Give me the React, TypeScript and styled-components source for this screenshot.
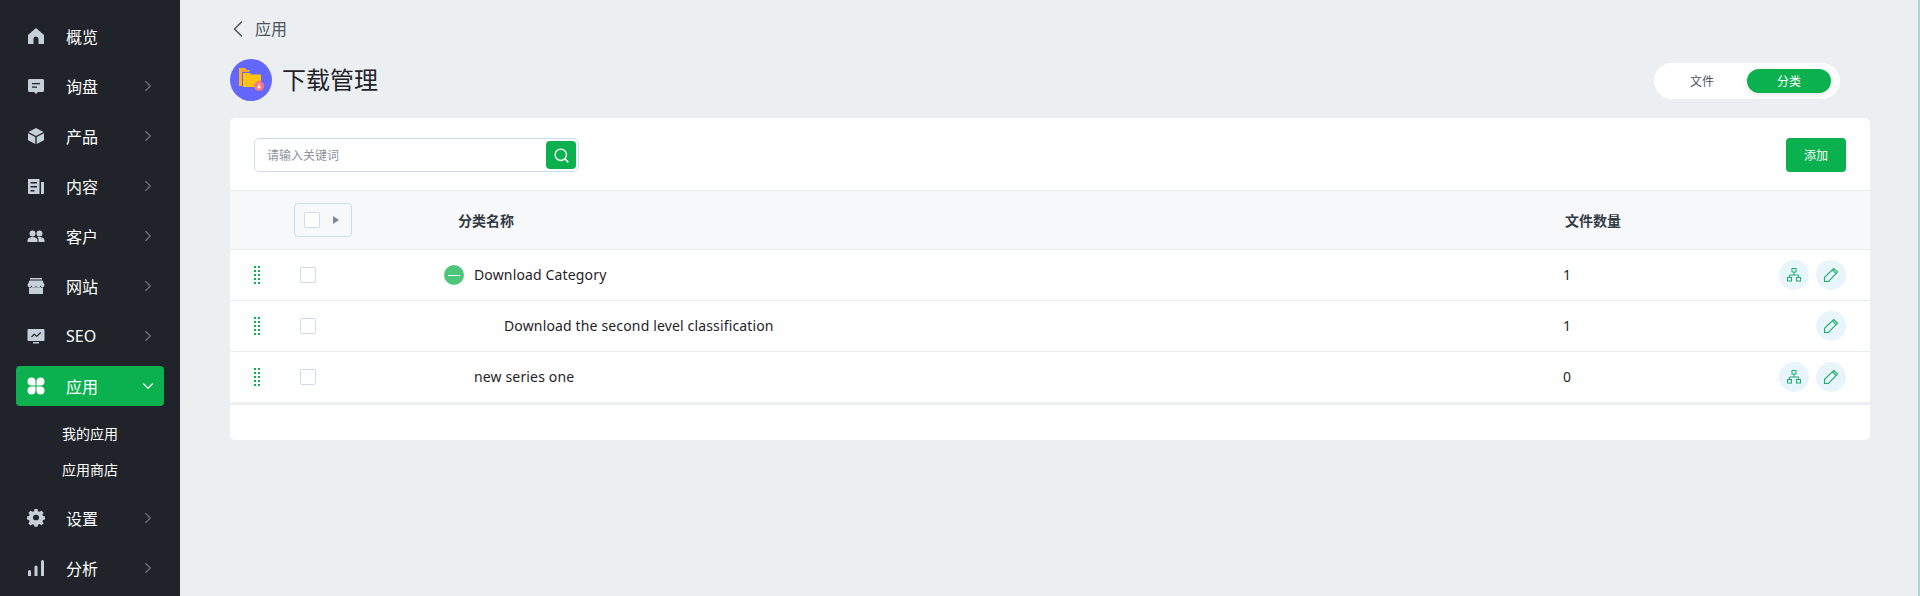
import styled, { createGlobalStyle } from "styled-components";
import { ChevronRight, ChevronDown, ChevronLeft, Search } from "lucide-react";

const GlobalStyle = createGlobalStyle`
  html, body {
    margin: 0;
    padding: 0;
    height: 100%;
    overflow: hidden;
  }
  body {
    font-family: "Noto Sans", "Noto Sans CJK SC", sans-serif;
    font-size: 14px;
    color: #1f2329;
  }
  * {
    box-sizing: border-box;
  }
`;

const Layout = styled.div`
  display: flex;
  width: 1920px;
  height: 596px;
  background-color: #ebeff2;
  border-right: 2px solid #9adbd9;
`;

const Sidebar = styled.nav`
  width: 180px;
  flex-shrink: 0;
  background-color: #202329;
  padding: 16px 16px 0;
  display: flex;
  flex-direction: column;
  overflow: hidden;
`;

const MenuItem = styled.div<{ $active?: boolean }>`
  display: flex;
  align-items: center;
  height: 40px;
  flex-shrink: 0;
  margin-bottom: 10px;
  padding: 0 12px 0 11px;
  border-radius: 4px;
  color: #fff;
  background-color: ${(props) => (props.$active ? "#0bb04f" : "transparent")};
`;

const MenuIcon = styled.svg<{ $active?: boolean }>`
  width: 18px;
  height: 18px;
  flex-shrink: 0;
  fill: ${(props) => (props.$active ? "#fff" : "#c6d0db")};
`;

const MenuLabel = styled.span`
  flex: 1;
  margin-left: 21px;
  font-size: 16px;
`;

const Arrow = styled.span<{ $active?: boolean }>`
  display: flex;
  color: ${(props) => (props.$active ? "#fff" : "#70757c")};
  margin-right: -5px;
`;

const SubMenu = styled.div`
  display: flex;
  flex-direction: column;
  margin-bottom: 10px;
`;

const SubItem = styled.div`
  height: 36px;
  line-height: 36px;
  padding-left: 46px;
  font-size: 14px;
  color: #fff;
`;

const Main = styled.main`
  flex: 1;
  min-width: 0;
  padding: 0 48px 0 50px;
`;

const BackRow = styled.div`
  display: flex;
  align-items: center;
  gap: 3px;
  height: 24px;
  margin: 17px 0 0 -6px;
  color: #4d5560;
  font-size: 16px;
  line-height: 24px;
`;

const TitleRow = styled.div`
  display: flex;
  align-items: center;
  height: 42px;
  margin-top: 18px;
`;

const AppIcon = styled.div`
  width: 42px;
  height: 42px;
  border-radius: 50%;
  background-color: #6366ff;
  display: flex;
  align-items: center;
  justify-content: center;
`;

const Title = styled.h1`
  flex: 1;
  margin: 0 0 4px 10px;
  font-size: 24px;
  font-weight: 400;
  color: #1f2329;
`;

const Segmented = styled.div`
  display: flex;
  align-items: center;
  width: 186px;
  height: 36px;
  padding: 0 9px 0 3px;
  margin: 2px 30px 0 0;
  border-radius: 18px;
  background-color: #fff;
`;

const Segment = styled.div<{ $active?: boolean }>`
  width: ${(props) => (props.$active ? "84px" : "90px")};
  height: 24px;
  line-height: 26px;
  text-align: center;
  font-size: 12px;
  border-radius: 12px;
  color: ${(props) => (props.$active ? "#fff" : "#4d5560")};
  background-color: ${(props) => (props.$active ? "#0bb04f" : "transparent")};
  box-shadow: ${(props) => (props.$active ? "0 2px 6px rgba(0, 0, 0, 0.1)" : "none")};
`;

const Card = styled.section`
  margin-top: 17px;
  height: 322px;
  background-color: #fff;
  border-radius: 5px;
  overflow: hidden;
`;

const Toolbar = styled.div`
  display: flex;
  align-items: center;
  justify-content: space-between;
  height: 72px;
  padding: 2px 24px 0;
`;

const SearchBox = styled.div`
  display: flex;
  align-items: center;
  justify-content: space-between;
  width: 325px;
  height: 34px;
  padding: 0 2px 0 12px;
  border: 1px solid #cddcec;
  border-radius: 5px;
  font-size: 12px;
  color: #8c939d;
`;

const SearchButton = styled.div`
  display: flex;
  align-items: center;
  justify-content: center;
  width: 30px;
  height: 28px;
  border-radius: 4px;
  background-color: #0bb04f;
  color: #fff;
`;

const AddButton = styled.div`
  width: 60px;
  height: 34px;
  line-height: 36px;
  text-align: center;
  border-radius: 4px;
  background-color: #0bb04f;
  color: #fff;
  font-size: 12px;
`;

const TableRow = styled.div<{ $head?: boolean }>`
  display: grid;
  grid-template-columns: 64px 144px 1127px 1fr auto;
  align-items: center;
  height: ${(props) => (props.$head ? "59px" : "51px")};
  padding-right: 24px;
  border-top: 1px solid #e9edf2;
  background-color: ${(props) => (props.$head ? "#f6f8fa" : "#fff")};
  font-weight: ${(props) => (props.$head ? 600 : 400)};
  font-size: 14px;
  letter-spacing: ${(props) => (props.$head ? "0" : "0.15px")};
  color: ${(props) => (props.$head ? "#333b45" : "#1f2329")};
`;

const DragDots = styled.div`
  margin-left: 24px;
  width: 6px;
  height: 18px;
  background-image: conic-gradient(#0bb04f 25%, transparent 0);
  background-size: 4px 4px;
  background-position: -2px 0;
`;

const Check = styled.div`
  width: 16px;
  height: 16px;
  margin-left: 6px;
  border: 1px solid #cddcec;
  border-radius: 2px;
  background-color: #fff;
`;

const CheckGroup = styled.div`
  display: flex;
  align-items: center;
  width: 58px;
  height: 34px;
  padding-left: 9px;
  gap: 13px;
  border: 1px solid #cddcec;
  border-radius: 4px;
  & > ${Check} {
    margin-left: 0;
  }
`;

const Caret = styled.span`
  width: 0;
  height: 0;
  border-left: 6px solid #7d8794;
  border-top: 4px solid transparent;
  border-bottom: 4px solid transparent;
`;

const NameCell = styled.div<{ $level: number; $head?: boolean }>`
  display: flex;
  align-items: center;
  gap: 10px;
  padding-left: ${(props) => (props.$head ? 20 : 36 + props.$level * 30)}px;
`;

const NameText = styled.span`
  margin-bottom: 2px;
`;

const CountCell = styled.span`
  margin: 0 0 2px -2px;
`;

const ToggleCircle = styled.span`
  position: relative;
  width: 20px;
  height: 20px;
  margin-left: -30px;
  border-radius: 50%;
  background-color: #4cc67a;
  &::after {
    content: "";
    position: absolute;
    left: 4px;
    right: 4px;
    top: 9.5px;
    height: 1px;
    background-color: #fff;
  }
`;

const Actions = styled.div`
  display: flex;
  justify-content: flex-end;
  gap: 7px;
`;

const RoundButton = styled.div`
  display: flex;
  align-items: center;
  justify-content: center;
  width: 30px;
  height: 30px;
  border-radius: 50%;
  background-color: #e8f5fd;
  color: #1fae66;
`;

const TableEnd = styled.div`
  height: 3px;
  background-color: #ebeff2;
`;

const menuIcons: Record<string, React.ReactNode> = {
  home: <path d="M9 1 1 8v9h5.500v-5a2.500 2.500 0 0 1 5 0v5H17V8z" />,
  chat: <path fillRule="evenodd" d="M2.500 2h13A1.500 1.500 0 0 1 17 3.500v10a1.500 1.500 0 0 1-1.500 1.500H11l-2 2-2-2H2.500A1.500 1.500 0 0 1 1 13.500v-10A1.500 1.500 0 0 1 2.500 2zM5 6v1.300h8V6zm0 3.500v1.300h5V9.500z" />,
  box: <path d="M9 1l7.500 4L9 9 1.500 5zM1 6.200l7.300 3.900V17L1 13.200zM17 6.200v7L9.700 17v-6.900z" />,
  doc: <path fillRule="evenodd" d="M1 2h11.500v15H2a1 1 0 0 1-1-1zm2.500 3v1.500h6.500V5zm0 4v1.500h6.500V9zm0 4v1.500h4V13zM14 5h3v11a1 1 0 0 1-1 1h-2z" />,
  users: <path d="M5.500 3.500a3 3 0 1 1 0 6 3 3 0 0 1 0-6zM12.500 3.500a3 3 0 1 1 0 6 3 3 0 0 1 0-6zM0.500 15v-1.500c0-2 2-3.500 5-3.500s5 1.500 5 3.500V15zM11.500 15v-2c0-1.200-.5-2.200-1.300-2.900.7-.1 1.500-.1 2.300-.1 3 0 5 1.500 5 3.500V15z" />,
  store: <path d="M3 1h12v1.500H3zM2.500 3.500h13L17.500 8a2 2 0 0 1-4 .3 2.200 2.200 0 0 1-4.500 0 2.200 2.200 0 0 1-4.500 0 2 2 0 0 1-4-.3zM2 10.500c1 .3 2 .2 2.800-.4 1.200.8 2.800.8 4.200 0 1.400.8 3 .8 4.200 0 .8.6 1.800.7 2.800.4V17H2z" />,
  seo: <path fillRule="evenodd" d="M1.500 2h15a1 1 0 0 1 1 1v10a1 1 0 0 1-1 1h-15a1 1 0 0 1-1-1V3a1 1 0 0 1 1-1zM4 9.500l.9.900 2.400-2.400 2.500 2 4.400-4-.9-.9-3.600 3.300-2.500-2zM6 15h6v1.500H6z" />,
  apps: <path d="M4.500 0.500a4 4 0 0 1 4 4v4h-4a4 4 0 0 1 0-8zM13.500 0.500a4 4 0 0 1 0 8h-4v-4a4 4 0 0 1 4-4zM4.500 9.500h4v4a4 4 0 1 1-4-4zM9.500 9.500h4a4 4 0 1 1-4 4z" />,
  gear: <path fillRule="evenodd" d="M7.500 1h3l.5 2.300 1.500.7 2-1.200 2.100 2.100-1.200 2 .6 1.500 2.300.6v3l-2.300.5-.6 1.500 1.200 2-2.100 2.100-2-1.200-1.500.6-.5 2.300h-3L7 17.700l-1.500-.6-2 1.200-2.100-2.100 1.200-2-.6-1.500L-.300 12V9l2.300-.6.600-1.500-1.200-2 2.100-2.100 2 1.200L7 3.300zM9 7a3 3 0 1 0 0 6 3 3 0 0 0 0-6z" transform="translate(0 -1) scale(1 .95)" />,
  bars: <path d="M1 12.500a1.500 1.500 0 0 1 3 0V17H1zM7.500 8a1.500 1.500 0 0 1 3 0v9h-3zM14 2.500a1.500 1.500 0 0 1 3 0V17h-3z" />,
};

const menus = [
  { key: "home", label: "概览", arrow: false },
  { key: "chat", label: "询盘", arrow: true },
  { key: "box", label: "产品", arrow: true },
  { key: "doc", label: "内容", arrow: true },
  { key: "users", label: "客户", arrow: true },
  { key: "store", label: "网站", arrow: true },
  { key: "seo", label: "SEO", arrow: true },
];

const rows = [
  { name: "Download Category", level: 0, count: 1, open: true, tree: true },
  { name: "Download the second level classification", level: 1, count: 1, open: false, tree: false },
  { name: "new series one", level: 0, count: 0, open: false, tree: true },
];

function SideItem({ icon, label, arrow, active }: { icon: string; label: string; arrow?: boolean; active?: boolean }) {
  return (
    <MenuItem $active={active}>
      <MenuIcon $active={active} viewBox="0 0 18 18">
        {menuIcons[icon]}
      </MenuIcon>
      <MenuLabel>{label}</MenuLabel>
      {arrow ? (
        <Arrow $active={active}>
          {active ? <ChevronDown size={18} strokeWidth={1.5} /> : <ChevronRight size={18} strokeWidth={1.5} />}
        </Arrow>
      ) : null}
    </MenuItem>
  );
}

function TreeIcon() {
  return (
    <svg width="16" height="16" viewBox="0 0 16 16" fill="none" stroke="currentColor" strokeWidth="1">
      <rect x="6" y="1.500" width="4" height="3.500" />
      <rect x="1.500" y="10.500" width="4" height="3.500" />
      <rect x="10.500" y="10.500" width="4" height="3.500" />
      <path d="M8 5v3M3.500 10.500V8h9v2.500" />
    </svg>
  );
}

function PencilIcon() {
  return (
    <svg width="16" height="16" viewBox="0 0 16 16" fill="none" stroke="currentColor" strokeWidth="1.100">
      <path d="M1.500 14.500v-4.200L10.700 1.500l3.800 3.600-9 9.400z" />
      <path d="M9.500 3l3.700 3.600" />
    </svg>
  );
}

function FolderIcon() {
  return (
    <svg width="28" height="28" viewBox="0 0 28 28">
      <path d="M2 2h6l1.500 2h3v1.800H5V20H2z" fill="#ffb01a" />
      <path d="M6 7h7l1 1.500h10V21H6z" fill="#ffc20e" />
      <circle cx="22" cy="20" r="5" fill="#fb7a7f" />
      <path d="M22 17.500v4.500M20.500 20.500l1.500 1.700 1.500-1.700" stroke="#fff" strokeWidth="1.100" fill="none" />
    </svg>
  );
}

function App() {
  return (
    <Layout>
      <GlobalStyle />
      <Sidebar>
        {menus.map((m) => (
          <SideItem key={m.key} icon={m.key} label={m.label} arrow={m.arrow} />
        ))}
        <SideItem icon="apps" label="应用" arrow active />
        <SubMenu>
          <SubItem>我的应用</SubItem>
          <SubItem>应用商店</SubItem>
        </SubMenu>
        <SideItem icon="gear" label="设置" arrow />
        <SideItem icon="bars" label="分析" arrow />
      </Sidebar>
      <Main>
        <BackRow>
          <ChevronLeft size={28} strokeWidth={1.3} />
          应用
        </BackRow>
        <TitleRow>
          <AppIcon>
            <FolderIcon />
          </AppIcon>
          <Title>下载管理</Title>
          <Segmented>
            <Segment>文件</Segment>
            <Segment $active>分类</Segment>
          </Segmented>
        </TitleRow>
        <Card>
          <Toolbar>
            <SearchBox>
              请输入关键词
              <SearchButton>
                <Search size={17} />
              </SearchButton>
            </SearchBox>
            <AddButton>添加</AddButton>
          </Toolbar>
          <TableRow $head>
            <span />
            <CheckGroup>
              <Check />
              <Caret />
            </CheckGroup>
            <NameCell $level={0} $head>
              分类名称
            </NameCell>
            <span>文件数量</span>
            <span />
          </TableRow>
          {rows.map((r) => (
            <TableRow key={r.name}>
              <DragDots />
              <Check />
              <NameCell $level={r.level}>
                {r.open ? <ToggleCircle /> : null}
                <NameText>{r.name}</NameText>
              </NameCell>
              <CountCell>{r.count}</CountCell>
              <Actions>
                {r.tree ? (
                  <RoundButton>
                    <TreeIcon />
                  </RoundButton>
                ) : null}
                <RoundButton>
                  <PencilIcon />
                </RoundButton>
              </Actions>
            </TableRow>
          ))}
          <TableEnd />
        </Card>
      </Main>
    </Layout>
  );
}

export default App;
